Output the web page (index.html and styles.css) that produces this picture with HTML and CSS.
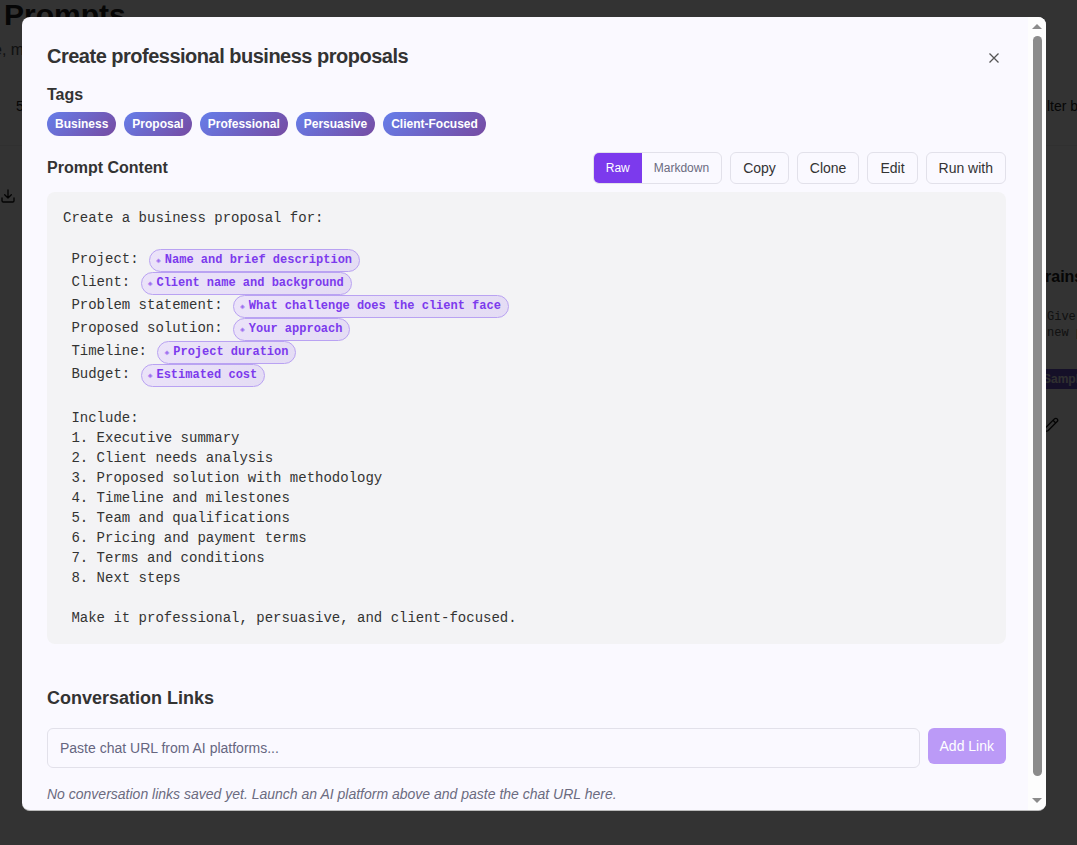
FILE: index.html
```html
<!DOCTYPE html>
<html lang="en">
<head>
<meta charset="utf-8">
<title>Prompts</title>
<link rel="stylesheet" href="styles.css">
</head>
<body>
<div class="page" aria-hidden="true">
  <div class="page-head">
    <div class="page-title">Prompts</div>
    <p class="page-sub">e, m</p>
  </div>
  <div class="filters"><span>5</span><span>lter by</span></div>
  <div class="board">
    <svg class="icon" viewBox="0 0 24 24" width="16" height="16"><path d="M12 3v12M7 10l5 5 5-5M3 15v4a2 2 0 0 0 2 2h14a2 2 0 0 0 2-2v-4"/></svg>
    <div class="card">
      <div class="card-title">rainstorm</div>
      <p class="card-text">Give me<br>new pro</p>
      <span class="chip">Sample</span>
      <svg class="icon" viewBox="0 0 24 24" width="16" height="16"><path d="M21.2 6.8a2.8 2.8 0 0 0-4-4L3.8 16.2a2 2 0 0 0-.5.8L2 21.4a.5.5 0 0 0 .6.6L7 20.7a2 2 0 0 0 .8-.5zM15 5l4 4"/></svg>
    </div>
  </div>
</div>
<div class="overlay">
  <section class="modal" role="dialog" aria-labelledby="modal-title">
    <div class="modal-body">
      <header class="modal-head">
        <h1 id="modal-title">Create professional business proposals</h1>
        <button class="close" aria-label="Close"><svg viewBox="0 0 10 10" width="10" height="10"><path d="M0.5 0.5l9 9M9.500.5l-9 9"/></svg></button>
      </header>
      <h2 class="label">Tags</h2>
      <div class="tags">
        <span class="tag">Business</span><span class="tag">Proposal</span><span class="tag">Professional</span><span class="tag">Persuasive</span><span class="tag">Client-Focused</span>
      </div>
      <div class="content-head">
        <h2 class="label">Prompt Content</h2>
        <div class="actions">
          <div class="toggle"><button class="on">Raw</button><button>Markdown</button></div>
          <button class="btn">Copy</button>
          <button class="btn">Clone</button>
          <button class="btn">Edit</button>
          <button class="btn">Run with</button>
        </div>
      </div>
<pre class="prompt">Create a business proposal for:

<span class="fields"> Project: <span class="var">Name and brief description</span>
 Client: <span class="var">Client name and background</span>
 Problem statement: <span class="var">What challenge does the client face</span>
 Proposed solution: <span class="var">Your approach</span>
 Timeline: <span class="var">Project duration</span>
 Budget: <span class="var">Estimated cost</span></span>
 Include:
 1. Executive summary
 2. Client needs analysis
 3. Proposed solution with methodology
 4. Timeline and milestones
 5. Team and qualifications
 6. Pricing and payment terms
 7. Terms and conditions
 8. Next steps

 Make it professional, persuasive, and client-focused.</pre>
      <h2 class="links-title">Conversation Links</h2>
      <form class="link-form">
        <input type="url" aria-label="Chat URL" placeholder="Paste chat URL from AI platforms...">
        <button type="button" class="add" disabled>Add Link</button>
      </form>
      <p class="empty">No conversation links saved yet. Launch an AI platform above and paste the chat URL here.</p>
    </div>
    <div class="scrollbar" aria-hidden="true">
      <i class="arrow up"></i><i class="thumb"></i><i class="arrow down"></i>
    </div>
  </section>
</div>
</body>
</html>
```

FILE: styles.css
```css
* { box-sizing: border-box; }
body {
  margin: 0;
  background: #fcfcfc;
  color: #333;
  font: 14px/20px "Liberation Sans", Arial, sans-serif;
}
h1, h2, p, pre { margin: 0; }
button, input { font: inherit; }

.page {
  position: absolute;
  inset: 0;
  overflow: hidden;
  color: #222;
}
.page-head { padding-left: 4px; height: 72px; }
.page-title { font-size: 30px; line-height: 30px; font-weight: 700; }
.page-sub { margin-left: -11px; padding-top: 8px; font-size: 16px; line-height: 24px; color: #555; }
.filters {
  display: flex;
  justify-content: space-between;
  height: 74px;
  padding: 24px 0 0 16px;
  border-bottom: 1px solid #eee;
}
.filters span:last-child { width: 30px; white-space: nowrap; }
.board { display: flex; justify-content: space-between; padding-top: 42px; }
.icon {
  display: block;
  fill: none;
  stroke: #111;
  stroke-width: 2;
  stroke-linecap: round;
  stroke-linejoin: round;
}
.card { width: 34px; padding-top: 79px; white-space: nowrap; }
.card-title { padding-left: 2px; font-size: 16px; font-weight: 700; }
.card-text { padding: 22px 0 0 4px; font: 12px/16px "Liberation Mono", monospace; color: #555; }
.chip {
  display: block;
  margin: 28px 0;
  font-size: 12px;
  font-weight: 700;
  background: #6a52c8;
  color: #eee;
}

.overlay {
  position: absolute;
  inset: 0;
  padding: 17px 31px 34px 22px;
  background: rgba(0, 0, 0, 0.8);
}
.modal {
  display: flex;
  height: 100%;
  overflow: hidden;
  border-bottom: 1px solid #bbb;
  border-radius: 8px;
  background: #faf9ff;
}
.modal-body { flex: 1; padding: 25px 22px 0 25px; }
.modal-head { display: flex; justify-content: space-between; }
h1 { font-size: 20px; line-height: 28px; letter-spacing: -0.025em; }
.close {
  display: flex;
  padding: 11px 7px;
  border: 0;
  background: none;
}
.close svg { fill: none; stroke: #555; stroke-width: 1.3; overflow: visible; }
.label { font-size: 16px; line-height: 24px; }
.modal-head + .label { margin-top: 9px; }
.tags { display: flex; gap: 8px; margin: 5px 0 16px; }
.tag {
  padding: 4px 8px;
  border-radius: 12px;
  background: linear-gradient(135deg, #667eea, #764ba2);
  color: #fff;
  font-size: 12px;
  line-height: 16px;
  font-weight: 700;
}
.content-head { display: flex; justify-content: space-between; align-items: center; margin-bottom: 8px; }
.actions { display: flex; gap: 8px; }
.toggle {
  display: flex;
  overflow: hidden;
  border: 1px solid #e2e1ea;
  border-radius: 6px;
}
.toggle button {
  padding: 0 12px;
  border: 0;
  background: none;
  color: #6b6b80;
  font-size: 12px;
}
.toggle .on { background: #7c3aed; color: #fff; }
.btn {
  height: 32px;
  padding: 0 12px;
  border: 1px solid #e2e1ea;
  border-radius: 6px;
  background: none;
  color: #333;
}
.prompt {
  padding: 16px;
  border-radius: 8px;
  background: #f3f3f5;
  font: 14px/20px "Liberation Mono", monospace;
}
.fields { display: block; padding: 1px 0; }
.var {
  display: inline-block;
  margin: 0 2px;
  padding: 2px 7px 3px 6px;
  border: 1px solid #b9a2f2;
  border-radius: 12px;
  background: linear-gradient(135deg, #ebe3f9, #e4dcf4);
  color: #7c3aed;
  font-size: 12px;
  line-height: 16px;
  font-weight: 700;
}
.var::before {
  content: "◈";
  margin-right: 4px;
  font-size: 8px;
  line-height: 8px;
  opacity: 0.7;
}
.links-title { margin-top: 40px; font-size: 18px; line-height: 28px; }
.link-form { display: flex; align-items: flex-start; gap: 8px; margin: 16px 0; }
.link-form input {
  flex: 1;
  height: 40px;
  padding: 0 12px;
  border: 1px solid #e2e1ea;
  border-radius: 6px;
  background: none;
}
.link-form input::placeholder { color: #66667f; }
.add {
  height: 36px;
  padding: 0 12px;
  border: 0;
  border-radius: 6px;
  background: #bb9af7;
  color: #fff;
}
.empty { color: #6b6b80; font-style: italic; }

.scrollbar {
  display: flex;
  flex-direction: column;
  align-items: center;
  width: 18px;
  padding: 7px 0;
  background: #fdfdfd;
}
.arrow { border: 5px solid transparent; }
.up { border-top: 0; border-bottom-color: #8b8b8b; }
.down { border-bottom: 0; border-top-color: #8b8b8b; }
.thumb {
  flex: 1;
  width: 9px;
  margin: 7px 0 22px;
  border-radius: 5px;
  background: #8b8b8b;
}
```
